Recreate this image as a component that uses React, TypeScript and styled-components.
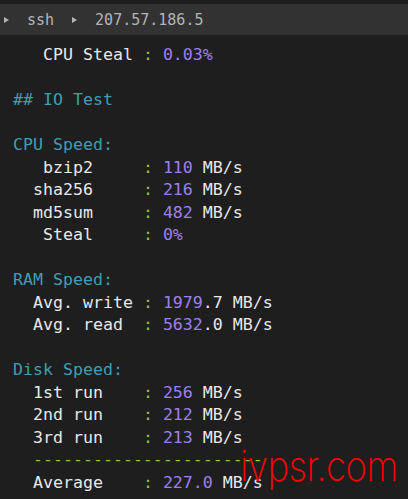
import React from "react";
import styled, { createGlobalStyle } from "styled-components";

const Global = createGlobalStyle`
  html, body { margin: 0; padding: 0; background: #1e1e1e; }
  body { width: 408px; height: 499px; overflow: hidden; }
`;

const Screen = styled.div`
  position: relative;
  width: 408px;
  height: 499px;
  background: #1e1e1e;
  padding-top: 4px;
  box-sizing: border-box;
  overflow: hidden;
`;

const TitleBar = styled.div`
  height: 31px;
  background: #323232;
  display: flex;
  align-items: center;
  gap: 18px;
  padding-left: 4px;
  font-family: "DejaVu Sans Mono", monospace;
  font-size: 15px;
  color: #b4b4b4;
`;

const Caret = styled.span`
  width: 0;
  height: 0;
  border-left: 5px solid #b4b4b4;
  border-top: 3px solid transparent;
  border-bottom: 3px solid transparent;
`;

const Terminal = styled.div`
  padding: 9px 0 0 13px;
  font-family: "DejaVu Sans Mono", monospace;
  font-size: 16.6px;
  color: #e8e8e8;
`;

const Line = styled.div`
  height: 22.5px;
  line-height: 22.5px;
  white-space: pre;
`;

const Head = styled.span`
  color: #3f9db6;
`;
const Sep = styled.span`
  color: #8cc43c;
`;
const Num = styled.span`
  color: #9c80f0;
`;

const Watermark = styled.div`
  position: absolute;
  left: 240px;
  top: 440px;
  font-family: Inter, "DejaVu Sans", sans-serif;
  font-weight: 200;
  font-size: 42px;
  color: #ff0000;
  transform: scaleX(0.87);
  transform-origin: left top;
  letter-spacing: -0.5px;
  pointer-events: none;
`;

type Row = { k?: string; h?: string; n?: string; rest?: string; dash?: string };

const rows: Row[] = [
  { k: "   CPU Steal ", n: "0.03%" },
  {},
  { h: "## IO Test" },
  {},
  { h: "CPU Speed:" },
  { k: "   bzip2     ", n: "110", rest: " MB/s" },
  { k: "  sha256     ", n: "216", rest: " MB/s" },
  { k: "  md5sum     ", n: "482", rest: " MB/s" },
  { k: "   Steal     ", n: "0%" },
  {},
  { h: "RAM Speed:" },
  { k: "  Avg. write ", n: "1979", rest: ".7 MB/s" },
  { k: "  Avg. read  ", n: "5632", rest: ".0 MB/s" },
  {},
  { h: "Disk Speed:" },
  { k: "  1st run    ", n: "256", rest: " MB/s" },
  { k: "  2nd run    ", n: "212", rest: " MB/s" },
  { k: "  3rd run    ", n: "213", rest: " MB/s" },
  { dash: "  -----------------------" },
  { k: "  Average    ", n: "227.0", rest: " MB/s" },
];

export default function App() {
  return (
    <>
      <Global />
      <Screen>
        <TitleBar>
          <Caret />
          <span>ssh</span>
          <Caret />
          <span>207.57.186.5</span>
        </TitleBar>
        <Terminal>
          {rows.map((r, i) => (
            <Line key={i}>
              {r.h && <Head>{r.h}</Head>}
              {r.dash && <Sep>{r.dash}</Sep>}
              {r.k !== undefined && (
                <>
                  {r.k}
                  <Sep>:</Sep> <Num>{r.n}</Num>
                  {r.rest}
                </>
              )}
              {!r.h && !r.dash && r.k === undefined && " "}
            </Line>
          ))}
        </Terminal>
        <Watermark>ivpsr.com</Watermark>
      </Screen>
    </>
  );
}
